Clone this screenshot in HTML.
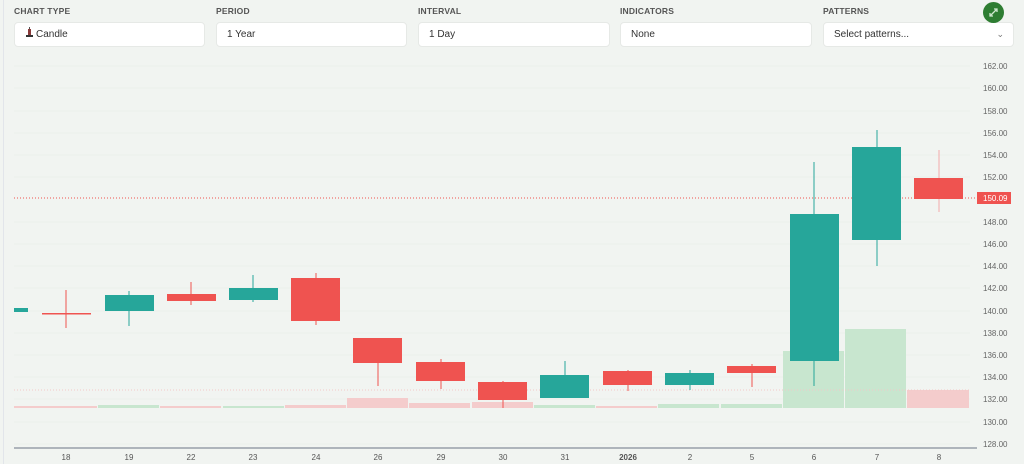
<!DOCTYPE html>
<html><head><meta charset="utf-8"><style>
*{margin:0;padding:0;box-sizing:border-box}
body{width:1024px;height:464px;background:#f1f4f1;font-family:"Liberation Sans",sans-serif;position:relative;overflow:hidden}
.lbl{position:absolute;top:6px;font-size:8.5px;font-weight:bold;color:#555;letter-spacing:.2px}
.inp{position:absolute;top:22px;height:25px;background:#fff;border-radius:4px;border:1px solid #e6e9e6;font-size:10px;color:#333;padding:0 10px;line-height:23px}
.btn{position:absolute;left:983px;top:2px;width:21px;height:21px;border-radius:50%;background:#2e7d32}
</style></head><body>
<div style="position:absolute;left:3px;top:0;width:1px;height:464px;background:#e2e5ea"></div>
<div class="lbl" style="left:14px">CHART TYPE</div>
<div class="lbl" style="left:216px">PERIOD</div>
<div class="lbl" style="left:418px">INTERVAL</div>
<div class="lbl" style="left:620px">INDICATORS</div>
<div class="lbl" style="left:823px">PATTERNS</div>
<div class="inp" style="left:14px;width:191px"><svg width="9" height="11" viewBox="0 0 9 11" style="vertical-align:-1px;margin-right:2px"><rect x="4" y="0" width="1" height="3" fill="#555"/><rect x="3" y="2" width="3" height="6" fill="#8a3a3a"/><rect x="1" y="8" width="7" height="2" fill="#333"/></svg>Candle</div>
<div class="inp" style="left:216px;width:191px">1 Year</div>
<div class="inp" style="left:418px;width:192px">1 Day</div>
<div class="inp" style="left:620px;width:192px">None</div>
<div class="inp" style="left:823px;width:191px">Select patterns...<span style="position:absolute;right:9px;top:0;font-size:9px;color:#777">&#8964;</span></div>
<div class="btn"><svg width="21" height="21" viewBox="0 0 21 21"><path d="M7 14 L14 7 M11 7 H14 V10 M7 11 V14 H10" stroke="#cfe8cf" stroke-width="1.3" fill="none"/></svg></div>
<svg style="position:absolute;left:0;top:0" width="1024" height="464">
<g stroke="#ecefec" stroke-width="1">
<line x1="14" y1="66" x2="970" y2="66"/><line x1="14" y1="88" x2="970" y2="88"/><line x1="14" y1="111" x2="970" y2="111"/><line x1="14" y1="133" x2="970" y2="133"/><line x1="14" y1="155" x2="970" y2="155"/><line x1="14" y1="177" x2="970" y2="177"/><line x1="14" y1="222" x2="970" y2="222"/><line x1="14" y1="244" x2="970" y2="244"/><line x1="14" y1="266" x2="970" y2="266"/><line x1="14" y1="288" x2="970" y2="288"/><line x1="14" y1="311" x2="970" y2="311"/><line x1="14" y1="333" x2="970" y2="333"/><line x1="14" y1="355" x2="970" y2="355"/><line x1="14" y1="377" x2="970" y2="377"/><line x1="14" y1="399" x2="970" y2="399"/><line x1="14" y1="422" x2="970" y2="422"/><line x1="14" y1="444" x2="970" y2="444"/>
</g>
<g>
<rect x="14" y="406" width="23" height="2" fill="#f4cccc"/>
<rect x="36" y="406" width="61" height="2" fill="#f4cccc"/>
<rect x="98" y="405" width="61" height="3" fill="#c8e6cf"/>
<rect x="160" y="406" width="61" height="2" fill="#f4cccc"/>
<rect x="223" y="406" width="61" height="2" fill="#c8e6cf"/>
<rect x="285" y="405" width="61" height="3" fill="#f4cccc"/>
<rect x="347" y="398" width="61" height="10" fill="#f4cccc"/>
<rect x="409" y="403" width="61" height="5" fill="#f4cccc"/>
<rect x="472" y="402" width="61" height="6" fill="#f4cccc"/>
<rect x="534" y="405" width="61" height="3" fill="#c8e6cf"/>
<rect x="596" y="406" width="61" height="2" fill="#f4cccc"/>
<rect x="658" y="404" width="61" height="4" fill="#c8e6cf"/>
<rect x="721" y="404" width="61" height="4" fill="#c8e6cf"/>
<rect x="783" y="351" width="61" height="57" fill="#c8e6cf"/>
<rect x="845" y="329" width="61" height="79" fill="#c8e6cf"/>
<rect x="907" y="390" width="62" height="18" fill="#f4cccc"/>
</g>
<line x1="14" y1="390" x2="970" y2="390" stroke="#f2c7c7" stroke-dasharray="1,2"/>
<line x1="14" y1="198" x2="975" y2="198" stroke="#ef5350" stroke-dasharray="1,2" stroke-width="1"/>
<g stroke-width="1">
<rect x="14" y="308" width="14" height="4" fill="#26a69a"/>
<line x1="66" y1="290" x2="66" y2="328" stroke="#ef5350"/><rect x="42" y="313" width="49" height="1.5" fill="#ef5350"/>
<line x1="129" y1="291" x2="129" y2="326" stroke="#26a69a"/><rect x="105" y="295" width="49" height="16" fill="#26a69a"/>
<line x1="191" y1="282" x2="191" y2="305" stroke="#ef5350"/><rect x="167" y="294" width="49" height="7" fill="#ef5350"/>
<line x1="253" y1="275" x2="253" y2="302" stroke="#26a69a"/><rect x="229" y="288" width="49" height="12" fill="#26a69a"/>
<line x1="316" y1="273" x2="316" y2="325" stroke="#ef5350"/><rect x="291" y="278" width="49" height="43" fill="#ef5350"/>
<line x1="378" y1="338" x2="378" y2="386" stroke="#ef5350"/><rect x="353" y="338" width="49" height="25" fill="#ef5350"/>
<line x1="441" y1="359" x2="441" y2="389" stroke="#ef5350"/><rect x="416" y="362" width="49" height="19" fill="#ef5350"/>
<line x1="503" y1="381" x2="503" y2="408" stroke="#ef5350"/><rect x="478" y="382" width="49" height="18" fill="#ef5350"/>
<line x1="565" y1="361" x2="565" y2="398" stroke="#26a69a"/><rect x="540" y="375" width="49" height="23" fill="#26a69a"/>
<line x1="628" y1="370" x2="628" y2="391" stroke="#ef5350"/><rect x="603" y="371" width="49" height="14" fill="#ef5350"/>
<line x1="690" y1="370" x2="690" y2="390" stroke="#26a69a"/><rect x="665" y="373" width="49" height="12" fill="#26a69a"/>
<line x1="752" y1="364" x2="752" y2="387" stroke="#ef5350"/><rect x="727" y="366" width="49" height="7" fill="#ef5350"/>
<line x1="814" y1="162" x2="814" y2="386" stroke="#26a69a"/><rect x="790" y="214" width="49" height="147" fill="#26a69a"/>
<line x1="877" y1="130" x2="877" y2="266" stroke="#26a69a"/><rect x="852" y="147" width="49" height="93" fill="#26a69a"/>
<line x1="939" y1="150" x2="939" y2="212" stroke="#f4aaaa"/><rect x="914" y="178" width="49" height="21" fill="#ef5350"/>
</g>
<line x1="14" y1="448" x2="977" y2="448" stroke="#6b7385" stroke-width="1"/>
<g font-size="8" fill="#555" text-anchor="middle" font-family="Liberation Sans">
<text x="66" y="460">18</text><text x="129" y="460">19</text><text x="191" y="460">22</text><text x="253" y="460">23</text><text x="316" y="460">24</text><text x="378" y="460">26</text><text x="441" y="460">29</text><text x="503" y="460">30</text><text x="565" y="460">31</text><text x="628" y="460" font-weight="bold">2026</text><text x="690" y="460">2</text><text x="752" y="460">5</text><text x="814" y="460">6</text><text x="877" y="460">7</text><text x="939" y="460">8</text>
</g>
<g font-size="8" fill="#666" font-family="Liberation Sans">
<text x="983" y="69">162.00</text><text x="983" y="91">160.00</text><text x="983" y="114">158.00</text><text x="983" y="136">156.00</text><text x="983" y="158">154.00</text><text x="983" y="180">152.00</text><text x="983" y="225">148.00</text><text x="983" y="247">146.00</text><text x="983" y="269">144.00</text><text x="983" y="291">142.00</text><text x="983" y="314">140.00</text><text x="983" y="336">138.00</text><text x="983" y="358">136.00</text><text x="983" y="380">134.00</text><text x="983" y="402">132.00</text><text x="983" y="425">130.00</text><text x="983" y="447">128.00</text>
</g>
<rect x="977" y="192" width="34" height="12" fill="#ef5350"/>
<text x="983" y="201" font-size="8" fill="#fff" font-family="Liberation Sans">150.09</text>
</svg>
</body></html>
